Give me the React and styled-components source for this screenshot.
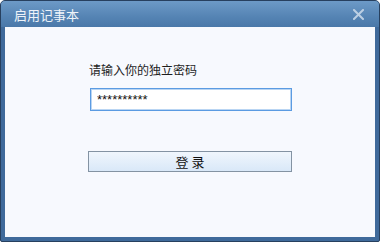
import React from "react";
import styled, { createGlobalStyle } from "styled-components";

const Global = createGlobalStyle`
  html, body { margin: 0; padding: 0; background: #ffffff; }
  body { font-family: "Noto Sans CJK SC", "Noto Sans", sans-serif; }
`;

const Window = styled.div`
  box-sizing: border-box;
  width: 380px;
  height: 242px;
  border: 1px solid #27405f;
  border-radius: 5px 5px 2px 2px;
  background: #3f6a9b;
  display: flex;
  flex-direction: column;
  overflow: hidden;
`;

const TitleBar = styled.div`
  height: 26px;
  flex: none;
  display: flex;
  align-items: center;
  justify-content: space-between;
  padding: 0 15px 0 13px;
  background: linear-gradient(#6d9ac7, #5584b4 60%, #4a78a9);
`;

const Title = styled.span`
  font-size: 13px;
  line-height: 13px;
  color: #eef3f9;
`;

const CloseIcon = styled.svg`
  width: 11px;
  height: 11px;
  display: block;
`;

const Frame = styled.div`
  flex: 1;
  display: flex;
  padding: 0 4px 4px;
`;

const Content = styled.div`
  flex: 1;
  background: #f7f9fe;
  display: flex;
  flex-direction: column;
  align-items: flex-start;
  padding: 36px 0 0 83px;
`;

const Label = styled.div`
  font-size: 12px;
  line-height: 14px;
  color: #1e1e1e;
  margin-left: 1px;
`;

const PasswordInput = styled.input`
  box-sizing: border-box;
  width: 202px;
  height: 23px;
  margin: 11px 0 0 2px;
  padding: 0 0 0 6px;
  border: 1px solid #5b9be2;
  box-shadow: inset 0 0 0 1px #b9d5f3;
  background: #ffffff;
  font-family: "Liberation Sans", Arial, sans-serif;
  font-size: 13px;
  color: #111;
  outline: none;
`;

const Button = styled.button`
  box-sizing: border-box;
  width: 204px;
  height: 21px;
  margin-top: 40px;
  border: 1px solid #8493a3;
  background: linear-gradient(#f0f6fd, #d9e8f8);
  font-family: "Noto Sans CJK SC", sans-serif;
  font-size: 13px;
  line-height: 19px;
  color: #111;
  padding: 0;
  white-space: pre;
`;

export default function App() {
  return (
    <>
      <Global />
      <Window>
        <TitleBar>
          <Title>启用记事本</Title>
          <CloseIcon viewBox="0 0 11 11">
            <path d="M1 1 L10 10 M10 1 L1 10" stroke="#bccfe3" strokeWidth="2" strokeLinecap="square" />
          </CloseIcon>
        </TitleBar>
        <Frame>
          <Content>
            <Label>请输入你的独立密码</Label>
            <PasswordInput readOnly value="**********" />
            <Button>{"登 录"}</Button>
          </Content>
        </Frame>
      </Window>
    </>
  );
}
